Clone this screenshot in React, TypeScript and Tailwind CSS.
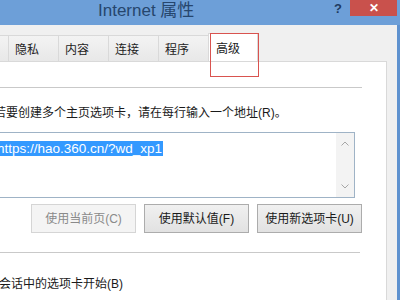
import React from "react";

const font = { fontFamily: '"Liberation Sans", "Noto Sans CJK SC", sans-serif' };

function Tab({ label, w }: { label: string; w: string }) {
  return (
    <div
      className={`${w} h-[26px] border-t border-r border-[#d9d9d9] bg-gradient-to-b from-[#f3f3f3] to-[#e8e8e8] text-[12px] leading-[16px] text-[#222] pl-[6px] pt-[6px]`}
    >
      {label}
    </div>
  );
}

function Btn({ label, disabled }: { label: string; disabled?: boolean }) {
  return (
    <div
      className={
        disabled
          ? "w-[105px] h-[29px] flex items-center justify-center border border-[#d5d5d5] bg-[#f4f4f4] text-[#8a8a8a] text-[12px]"
          : "w-[105px] h-[29px] flex items-center justify-center border border-[#acacac] bg-gradient-to-b from-[#f0f0f0] to-[#e2e2e2] text-[#1a1a1a] text-[12px]"
      }
    >
      {label}
    </div>
  );
}

export default function App() {
  return (
    <div className="w-[400px] h-[300px] overflow-hidden flex flex-col bg-[#6d9fd8] relative" style={font}>
      {/* title bar */}
      <div className="h-[25px] flex items-start shrink-0">
        <div className="w-[98px]" />
        <div className="text-[17px] leading-[22px] text-[#26466d]">Internet 属性</div>
        <div className="flex-1" />
        <div className="text-[13px] leading-[14px] font-bold text-[#1f3b60] mt-[2px] mr-[8px]">?</div>
        <div className="w-[47px] h-[16px] bg-[#c9514c] flex items-center justify-center text-white text-[12px] leading-[12px] font-bold mr-[3px]">
          ✕
        </div>
      </div>
      {/* body */}
      <div className="flex-1 flex">
        <div className="w-[397px] bg-[#f0f0f0] flex flex-col pt-[8px]">
          {/* tabs */}
          <div className="flex items-end h-[28px] shrink-0">
            <div className="w-[9px] h-[26px] border-t border-r border-[#d9d9d9] bg-gradient-to-b from-[#f3f3f3] to-[#e8e8e8]" />
            <Tab label="隐私" w="w-[50px]" />
            <Tab label="内容" w="w-[50px]" />
            <Tab label="连接" w="w-[50px]" />
            <Tab label="程序" w="w-[50px]" />
            <div className="w-[50px] h-[28px] border-t border-r border-[#d9d9d9] bg-white text-[12px] leading-[16px] text-[#222] pl-[7px] pt-[7px] -ml-[1px] border-l">
              高级
            </div>
          </div>
          {/* panel */}
          <div className="w-[387px] flex-1 bg-white border-t border-r border-[#d9d9d9] flex flex-col overflow-hidden">
            <div className="mt-[25px] w-[362px] h-px bg-[#c9c9c9]" />
            <div className="mt-[17px] ml-[-6px] whitespace-nowrap text-[12px] leading-[16px] text-[#1a1a1a]">
              若要创建多个主页选项卡，请在每行输入一个地址(R)。
            </div>
            <div className="mt-[11px] ml-[-10px] w-[365px] h-[66px] border border-[#9fb3c6] flex">
              <div className="flex-1 pt-[3px] pl-[6px]">
                <span className="inline-block bg-[#3399ff] text-white text-[13.5px] leading-[15px] pr-[1px]">
                  https://hao.360.cn/?wd_xp1
                </span>
              </div>
              <div className="w-[18px] bg-[#f3f3f3] flex flex-col items-center justify-between py-[8px]">
                <svg width="8" height="5" viewBox="0 0 8 5">
                  <path d="M0.5 4.5 L4 1 L7.5 4.5" fill="none" stroke="#a6a6a6" strokeWidth="1" />
                </svg>
                <svg width="8" height="5" viewBox="0 0 8 5">
                  <path d="M0.5 0.5 L4 4 L7.5 0.5" fill="none" stroke="#a6a6a6" strokeWidth="1" />
                </svg>
              </div>
            </div>
            <div className="mt-[6px] flex gap-[8px] pl-[31px]">
              <Btn label="使用当前页(C)" disabled />
              <Btn label="使用默认值(F)" />
              <Btn label="使用新选项卡(U)" />
            </div>
            <div className="mt-[19px] w-[360px] h-px bg-[#c9c9c9]" />
            <div className="mt-[23px] ml-[-37px] whitespace-nowrap text-[12px] leading-[16px] text-[#1a1a1a]">
              从上次会话中的选项卡开始(B)
            </div>
          </div>
        </div>
        <div className="flex-1 bg-[#5f92cf]" />
      </div>
      {/* red highlight box */}
      <div className="absolute left-[210px] top-[33px] w-[49px] h-[44px] border border-[#d9534f]" />
    </div>
  );
}
